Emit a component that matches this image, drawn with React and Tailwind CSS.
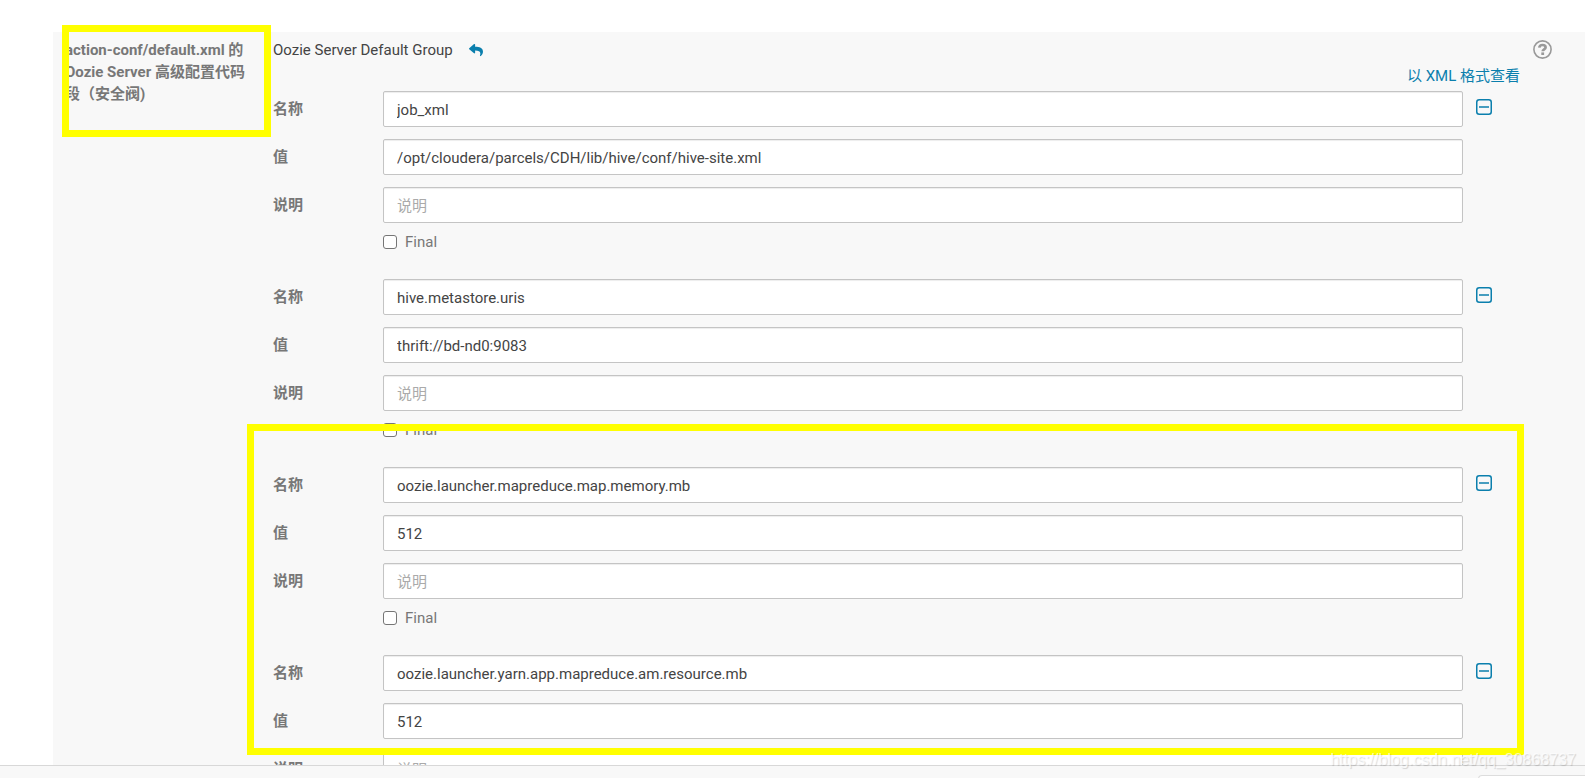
import React from 'react';
import { FaReply } from 'react-icons/fa';

const PROPERTIES = [
  { id: 'job-xml', name: 'job_xml', value: '/opt/cloudera/parcels/CDH/lib/hive/conf/hive-site.xml' },
  { id: 'metastore', name: 'hive.metastore.uris', value: 'thrift://bd-nd0:9083' },
  { id: 'map-memory', name: 'oozie.launcher.mapreduce.map.memory.mb', value: '512' },
  { id: 'am-resource', name: 'oozie.launcher.yarn.app.mapreduce.am.resource.mb', value: '512' },
];

const MinusSquare = () => (
  <svg className="block h-4 w-4" viewBox="0 0 16 16" fill="none" stroke="currentColor" aria-hidden="true">
    <rect x="0.75" y="0.75" width="14.5" height="14.5" rx="2.5" strokeWidth="1.5" />
    <path d="M3 8h10" strokeWidth="1.5" />
  </svg>
);

const HelpCircle = () => (
  <svg className="block h-[19px] w-[19px]" viewBox="0 0 19 19" fill="none" stroke="currentColor" aria-hidden="true">
    <circle cx="9.5" cy="9.5" r="8.6" strokeWidth="1.6" />
    <path d="M6.300 7.600C6.500 6 7.700 5 9.500 5c1.800 0 3.100.9 3.100 2.400 0 1.900-2.900 1.900-2.900 3.900" strokeWidth="2.700" />
    <path d="M9.700 12.400v2.600" strokeWidth="2.800" />
  </svg>
);

const Field = ({ id, label, value, placeholder, children }) => (
  <div className="flex">
    <label htmlFor={id} className="w-[110px] shrink-0 pt-[7px] font-bold text-[#777]">
      {label}
    </label>
    <input
      id={id}
      type="text"
      defaultValue={value}
      placeholder={placeholder}
      className="h-9 min-w-0 flex-1 rounded-xs border border-[#c4c4c4] bg-white px-[13px] pt-0.5 text-[#444] shadow-[inset_0_1px_1px_rgba(0,0,0,0.075)] outline-none placeholder:text-[#aaa]"
    />
    <div className="w-[57px] shrink-0 pt-2 pl-[13px]">{children}</div>
  </div>
);

const PropertyGroup = ({ property }) => (
  <div className="mb-[26px]">
    <div className="flex flex-col gap-3">
      <Field id={`${property.id}-name`} label="名称" value={property.name}>
        <button type="button" aria-label="删除" className="block text-[#0b7fad]">
          <MinusSquare />
        </button>
      </Field>
      <Field id={`${property.id}-value`} label="值" value={property.value} />
      <Field id={`${property.id}-desc`} label="说明" placeholder="说明" />
    </div>
    <label className="mt-2 ml-[110px] flex w-fit items-center gap-2 text-[#777]">
      <input
        type="checkbox"
        className="h-3.5 w-3.5 appearance-none rounded-[3px] border border-[#767676] bg-white checked:bg-[#0b7fad]"
      />
      Final
    </label>
  </div>
);

const App = () => {
  return (
    <div className="relative flex h-screen flex-col overflow-hidden bg-white font-[Roboto,'Noto_Sans_CJK_SC',sans-serif] text-[15px] leading-[22px] text-[#444]">
      <main className="min-h-0 flex-1 overflow-hidden pt-8 pl-[53px]">
        <section className="flex bg-[#f8f8f8] pt-[7px]">
          <h2 className="w-[220px] shrink-0 pr-5 pl-3 font-bold text-[#777]">
            action-conf/default.xml 的 Oozie Server 高级配置代码段（安全阀)
          </h2>

          <div className="min-w-0 flex-1">
            <div className="flex items-center gap-4">
              <span>Oozie Server Default Group</span>
              <button type="button" aria-label="重置" className="text-[#0b7fad]">
                <FaReply className="h-3.5 w-3.5" />
              </button>
            </div>
            <div className="mt-1 mb-1 flex justify-end">
              <a href="#xml" className="text-[#0b7fad]">以 XML 格式查看</a>
            </div>
            {PROPERTIES.map((property) => (
              <PropertyGroup key={property.id} property={property} />
            ))}
          </div>

          <div className="w-[65px] shrink-0 pt-px pl-[13px]">
            <button type="button" aria-label="帮助" className="block text-[#999]">
              <HelpCircle />
            </button>
          </div>
        </section>
      </main>

      {/* Footer bar */}
      <footer className="flex h-[13px] shrink-0 justify-end overflow-hidden border-t border-[#d8d8d8] bg-[#f8f8f8] pt-[9px]">
        <div className="h-9 w-[107px] shrink-0 rounded-tl-sm border-t border-l border-[#ddd] bg-white" />
      </footer>

      {/* Highlight frames */}
      <div className="pointer-events-none absolute top-[25px] left-[62px] h-[112px] w-[209px] border-[7px] border-[#ff0]" />
      <div className="pointer-events-none absolute top-[424px] right-[61px] left-[247px] h-[331px] border-[7px] border-[#ff0]" />

      <span className="pointer-events-none absolute right-[9px] bottom-1.5 font-['Liberation_Sans',sans-serif] text-base text-white/70 [text-shadow:1px_1px_1px_rgba(0,0,0,0.15)]">
        https://blog.csdn.net/qq_30868737
      </span>
    </div>
  );
};

export default App;
